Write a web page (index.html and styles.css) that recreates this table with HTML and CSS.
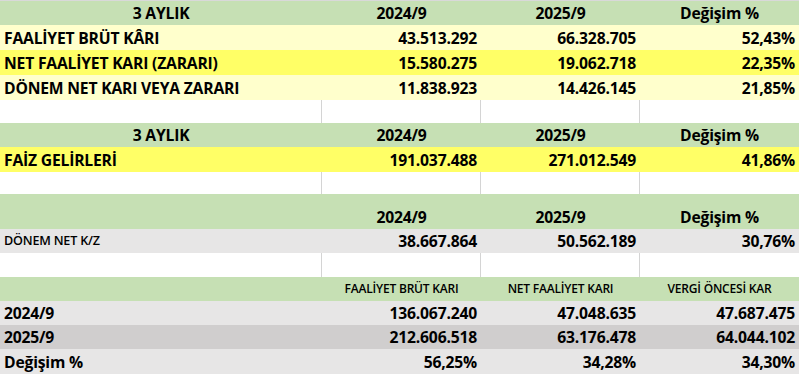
FILE: index.html
```html
<!DOCTYPE html>
<html lang="tr">
<head>
<meta charset="utf-8">
<title>3 Aylık</title>
<link rel="stylesheet" href="styles.css">
</head>
<body>
<div class="sheet">
  <div class="row green h24">
    <div class="c ctr">3 AYLIK</div><div class="c ctr">2024/9</div><div class="c ctr">2025/9</div><div class="c ctr">Değişim %</div>
  </div>
  <div class="row lyellow h25">
    <div class="c">FAALİYET BRÜT KÂRI</div><div class="c num">43.513.292</div><div class="c num">66.328.705</div><div class="c num">52,43%</div>
  </div>
  <div class="row yellow h25">
    <div class="c">NET FAALİYET KARI (ZARARI)</div><div class="c num">15.580.275</div><div class="c num">19.062.718</div><div class="c num">22,35%</div>
  </div>
  <div class="row lyellow h25">
    <div class="c">DÖNEM NET KARI VEYA ZARARI</div><div class="c num">11.838.923</div><div class="c num">14.426.145</div><div class="c num">21,85%</div>
  </div>
  <div class="row blank h23">
    <div class="c"></div><div class="c"></div><div class="c"></div><div class="c"></div>
  </div>

  <div class="row green h24">
    <div class="c ctr">3 AYLIK</div><div class="c ctr">2024/9</div><div class="c ctr">2025/9</div><div class="c ctr">Değişim %</div>
  </div>
  <div class="row yellow h25">
    <div class="c">FAİZ GELİRLERİ</div><div class="c num">191.037.488</div><div class="c num">271.012.549</div><div class="c num">41,86%</div>
  </div>
  <div class="row blank h22">
    <div class="c"></div><div class="c"></div><div class="c"></div><div class="c"></div>
  </div>

  <div class="row green h35">
    <div class="c"></div><div class="c ctr">2024/9</div><div class="c ctr">2025/9</div><div class="c ctr">Değişim %</div>
  </div>
  <div class="row lgray h24">
    <div class="c label-sm">DÖNEM NET K/Z</div><div class="c num">38.667.864</div><div class="c num">50.562.189</div><div class="c num">30,76%</div>
  </div>
  <div class="row blank h24">
    <div class="c"></div><div class="c"></div><div class="c"></div><div class="c"></div>
  </div>

  <div class="row green h24">
    <div class="c"></div><div class="c ctr small">FAALİYET BRÜT KARI</div><div class="c ctr small">NET FAALİYET KARI</div><div class="c ctr small">VERGİ ÖNCESİ KAR</div>
  </div>
  <div class="row lgray h24">
    <div class="c">2024/9</div><div class="c num">136.067.240</div><div class="c num">47.048.635</div><div class="c num">47.687.475</div>
  </div>
  <div class="row dgray h24">
    <div class="c">2025/9</div><div class="c num">212.606.518</div><div class="c num">63.176.478</div><div class="c num">64.044.102</div>
  </div>
  <div class="row lgray h25">
    <div class="c">Değişim %</div><div class="c num">56,25%</div><div class="c num">34,28%</div><div class="c num">34,30%</div>
  </div>
</div>
</body>
</html>
```
FILE: styles.css
```css
html, body {
  margin: 0;
  padding: 0;
  background: #ffffff;
}

.sheet {
  width: 799px;
  border-top: 1px solid #d9d9d9;
  font-family: "Open Sans", "Noto Sans", sans-serif;
  font-weight: 700;
  font-size: 15.7px;
  color: #000000;
}

.row {
  display: grid;
  grid-template-columns: 322px 159px 159px 159px;
}

.h22 { height: 22px; }
.h23 { height: 23px; }
.h24 { height: 24px; }
.h25 { height: 25px; }
.h35 { height: 35px; }

.green { background: #c6e0b4; }
.lyellow { background: #ffffcc; }
.yellow { background: #ffff66; }
.lgray { background: #e7e6e6; }
.dgray { background: #d0cece; }
.blank { background: #ffffff; }

.c {
  display: flex;
  align-items: flex-end;
  padding: 0 4px 4px 4px;
  line-height: 16px;
  white-space: nowrap;
  overflow: hidden;
  letter-spacing: -0.2px;
}

.blank .c {
  border-right: 1px solid #d4d4d4;
}
.blank .c:last-child {
  border-right: none;
}

.ctr { justify-content: center; }
.num { justify-content: flex-end; }

.small {
  font-size: 12px;
  font-weight: 600;
}

.label-sm {
  font-size: 12.6px;
  font-weight: 600;
}
```
